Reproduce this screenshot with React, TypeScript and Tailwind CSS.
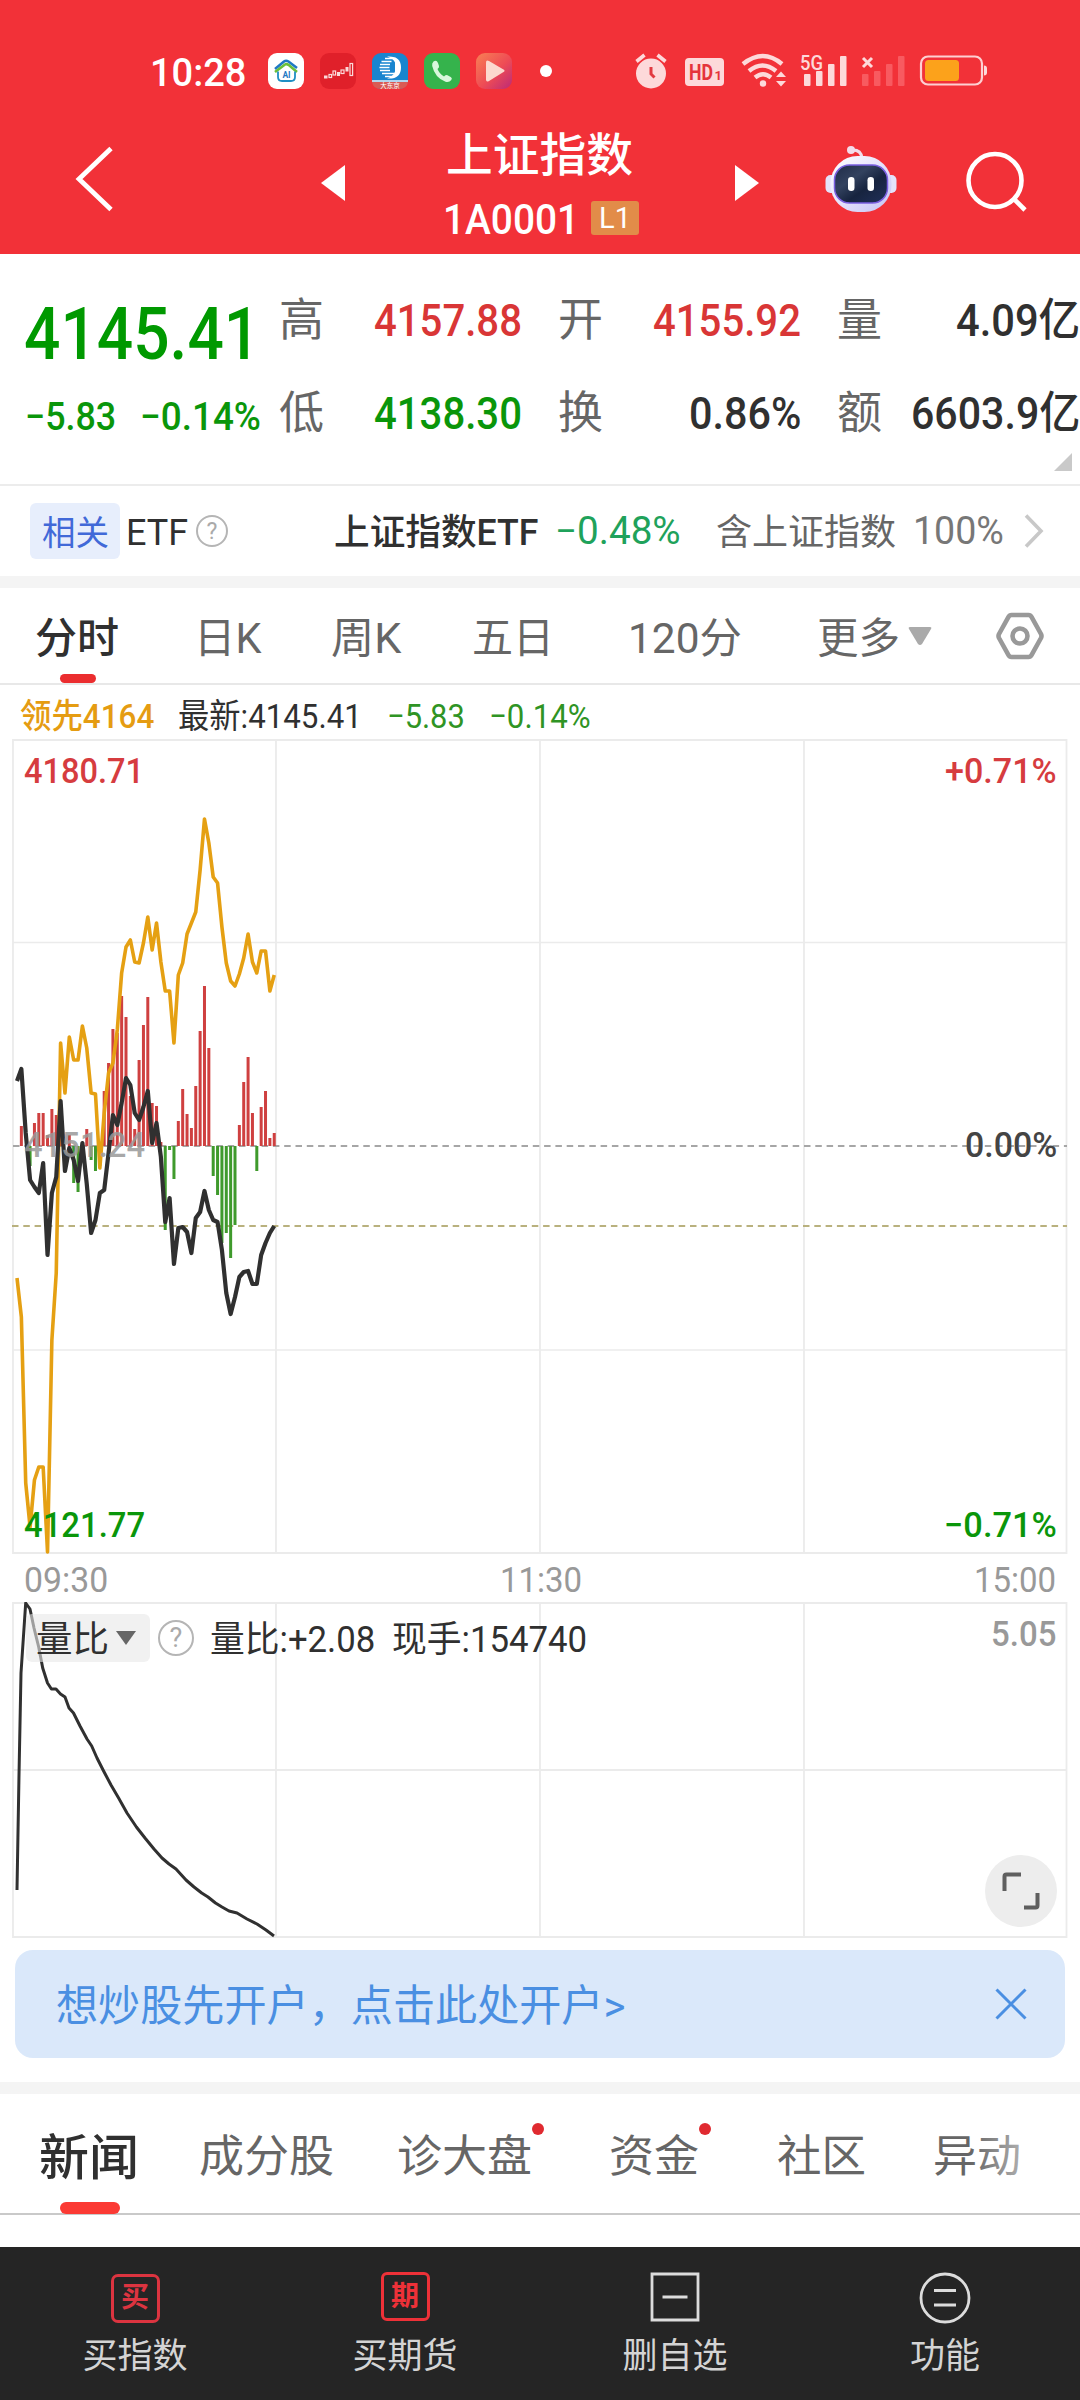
import { useLayoutEffect, useRef } from 'react';
import type { ReactNode } from 'react';

/** One line of text, condensed or widened to fill the width given by its class. */
function Fit({ className = '', children }: { className?: string; children: ReactNode }) {
  const inner = useRef<HTMLSpanElement>(null);
  useLayoutEffect(() => {
    const el = inner.current;
    if (!el || !el.parentElement) return;
    el.style.transform = `translateY(1.5px) scaleX(${el.parentElement.clientWidth / el.offsetWidth})`;
  }, []);
  return (
    <div className={`shrink-0 whitespace-nowrap leading-none ${className}`}>
      <span ref={inner} className="inline-block origin-left">
        {children}
      </span>
    </div>
  );
}

const lead = [
  1278, 1317, 1483, 1527, 1480, 1467, 1467, 1552, 1340, 1273, 1043, 1093, 1037, 1060, 1060, 1026, 1048, 1093, 1094,
  1168, 1113, 1073, 1063, 1030, 973, 947, 940, 962, 963, 943, 917, 950, 923, 962, 991, 991, 1043, 975, 963, 934, 923,
  912, 870, 819, 843, 877, 883, 927, 963, 981, 986, 974, 958, 934, 962, 973, 951, 951, 991, 975,
];
const price = [
  1081, 1069, 1133, 1180, 1187, 1193, 1163, 1255, 1193, 1177, 1101, 1171, 1148, 1160, 1181, 1143, 1184, 1233, 1220,
  1193, 1190, 1153, 1115, 1125, 1103, 1078, 1085, 1113, 1120, 1107, 1091, 1143, 1123, 1157, 1222, 1198, 1264, 1228,
  1227, 1232, 1253, 1218, 1212, 1191, 1210, 1220, 1222, 1250, 1293, 1314, 1297, 1277, 1272, 1271, 1284, 1284, 1255,
  1243, 1233, 1226,
];
const bars = [
  0, 20, 0, -20, 23, 33, 33, 11, 37, 31, 40, 0, 11, -37, -46, -12, 17, -14, -25, -20, 55, 83, 117, 113, 150, 129, 50,
  17, 86, 121, 149, 43, 40, 4, -84, -4, -33, 25, 57, 32, 18, 60, 115, 160, 98, -30, -49, -97, -87, -112, -79, 21, 64,
  89, 33, -25, 39, 55, 8, 13,
];
const ratio =
  '17,1890 19,1775 21,1673 25.7,1603 30,1609 34,1628 38.7,1647 42.7,1668 47.5,1683 51.4,1689 56,1689 60.5,1694 65,1697 69,1708 73.5,1713 80,1726 87,1739 91.7,1746 97,1758 103.6,1771 111,1785 118.6,1798 127,1813 136.4,1827 145,1838 154,1849 162,1858 169,1864 176,1869 186,1880 194,1887 201.7,1893 208,1897 215.5,1903 222,1907 229,1911 237,1913 247,1919 257,1924 266,1930 274,1936';

const px = (i: number) => 17 + i * 4.36;
const toPoints = (ys: number[]) => ys.map((y, i) => `${px(i)},${y}`).join(' ');

function StatusBar() {
  return (
    <div className="flex h-[36px] items-center">
      <Fit className="ml-[150px] w-[96px] text-[38px] font-medium text-white">10:28</Fit>
      <svg className="ml-[22px]" width="244" height="36" viewBox="0 0 244 36">
        <defs>
          <linearGradient id="play" x1="0" y1="0" x2="1" y2="1">
            <stop offset="0" stopColor="#f88054" />
            <stop offset="0.55" stopColor="#ee4b55" />
            <stop offset="1" stopColor="#bb2a78" />
          </linearGradient>
        </defs>
        <rect width="36" height="36" rx="9" fill="#fff" />
        <path d="M7 16 16 8.500q2-1.500 4.500 0L29 15" fill="none" stroke="#1f79c4" strokeWidth="2.600" />
        <path d="M7 19 17 11.500q1.500-1 3.500.3L29 19" fill="none" stroke="#6abf3a" strokeWidth="2.600" />
        <path d="M10 18.500V24q0 4 4 4h9q4 0 4-4v-5.500" fill="none" stroke="#1f8fc4" strokeWidth="1.800" />
        <text x="18.5" y="25" textAnchor="middle" fontSize="8.5" fontWeight="700" fill="#1f79c4">AI</text>

        <rect x="52" width="36" height="36" rx="9" fill="#e0202a" />
        <g fill="none" stroke="#fbd9d9" strokeWidth="1.200">
          <rect x="61" y="21.500" width="2.600" height="3" />
          <rect x="65" y="18" width="2.600" height="4" />
          <rect x="73" y="17" width="3" height="3.500" />
          <rect x="82" y="10.500" width="2.600" height="12" />
        </g>
        <rect x="56" y="22.500" width="3.500" height="3" fill="#fbd9d9" />
        <rect x="69" y="19" width="3" height="4" fill="#fbd9d9" />
        <rect x="77.500" y="14" width="3" height="4.500" fill="#fbd9d9" />

        <rect x="104" width="36" height="36" rx="9" fill="#1985cf" />
        <path d="M104 29h36q-1 7-9 7h-18q-8 0-9-7z" fill="#d95a55" />
        <path d="M104 28h36" stroke="#e4f0fa" strokeWidth="1.400" />
        <path d="M119 3.500q14-1 14 11t-14 11q6-2 8-7V9.500q-1.500-4-8-6z" fill="#fff" />
        <path
          d="M117 5.500h11M113.500 8.500h10M112 11.500h10M111.500 14.500h10M112 17.500h10M114 20.500h12M117 23.500h9"
          stroke="#fff"
          strokeWidth="1.600"
        />
        <text x="122" y="34.500" textAnchor="middle" fontSize="6.500" fill="#fff">大东京</text>

        <rect x="156" width="36" height="36" rx="9" fill="#35b34c" />
        <path
          d="M165.500 8.500q3-2 4.500 1.500l1 3q.5 1.500-1.500 3 2 5 6.500 7.500 2-2 3.500-1.300l3.200 1.700q2 1.200.6 3-2.300 3-5.800 1.800Q167 25 164.200 13q-.5-3 1.300-4.500z"
          fill="#d9f7dc"
        />

        <rect x="208" width="36" height="36" rx="9" fill="url(#play)" />
        <path d="M218 9.500q0-3 3-1.500l14.500 8.500q2 1.200 0 2.600L221 28q-3 1.500-3-1.500z" fill="#fcd9cf" />
      </svg>
      <div className="ml-[28px] size-[12px] rounded-full bg-white" />
      <svg className="ml-[82px] overflow-visible" width="354" height="36" viewBox="0 0 354 36" fill="#fdd9da">
        <circle cx="17" cy="20.500" r="15" />
        <path d="M2.500 8.500 10.500 2M31.500 8.500 23.500 2" stroke="#fdd9da" strokeWidth="3.600" />
        <path d="M17 14v7l3.500 3.500" fill="none" stroke="#e23a41" strokeWidth="3" />
        <rect x="51" y="5" width="39" height="28" rx="4" />
        <text x="55" y="27" fontSize="22" fontWeight="700" fill="#e5343b" textLength="24" lengthAdjust="spacingAndGlyphs">HD</text>
        <text x="80.500" y="27" fontSize="13" fontWeight="700" fill="#e5343b">1</text>
        <g fill="none" stroke="#fdd9da" strokeWidth="4.400">
          <path d="M109 11q20-16 39 0" />
          <path d="M115 18q13.500-11 27 0" />
          <path d="M121 24.500q8-6.500 16 0" />
        </g>
        <circle cx="129" cy="30.500" r="3.200" />
        <path d="m142 24 5-5.500 5 5.500zM142 28l5 5.500 5-5.500z" />
        <text x="166" y="16.500" fontSize="21" fontWeight="500" textLength="23" lengthAdjust="spacingAndGlyphs">5G</text>
        <rect x="170" y="21" width="6.500" height="12" rx="1" />
        <rect x="182" y="18" width="6.500" height="15" rx="1" />
        <rect x="194" y="11" width="6.500" height="22" rx="1" />
        <rect x="206" y="3" width="6.500" height="30" rx="1" />
        <path d="m229 5 9 9m0-9-9 9" stroke="#fdd9da" strokeWidth="3" />
        <g fill="#f85a60">
          <rect x="228" y="21" width="6.500" height="12" rx="1" />
          <rect x="240" y="18" width="6.500" height="15" rx="1" />
          <rect x="252" y="11" width="6.500" height="22" rx="1" />
          <rect x="264" y="3" width="6.500" height="30" rx="1" />
        </g>
        <rect x="287" y="3.500" width="61" height="28" rx="7" fill="none" stroke="#fdd0d2" strokeWidth="2.200" />
        <rect x="291" y="7" width="34" height="21" rx="3.500" fill="#fca21b" />
        <path d="M350 12.500q3 0 3 3v4q0 3-3 3z" />
      </svg>
    </div>
  );
}

function Header() {
  return (
    <div className="h-[254px] bg-[#f23138] pt-[53px]">
      <StatusBar />
      <div className="mt-[31px] flex h-[134px] items-start">
        <svg className="ml-[74px] mt-[26px]" width="40" height="66" fill="none" stroke="#fff" strokeWidth="4.800">
          <path d="M37 2.500 5 33l32 30.500" />
        </svg>
        <svg className="ml-[207px] mt-[45px]" width="24" height="36" fill="#fff">
          <path d="M24 0v36L0 18z" />
        </svg>
        <div className="ml-[99px] w-[198px]">
          <Fit className="ml-[2px] mt-[10px] h-[48px] w-[187px] text-[46px] font-medium text-white">上证指数</Fit>
          <div className="mt-[18px] flex h-[44px] items-center">
            <Fit className="ml-[-1px] w-[136px] text-[42px] font-medium text-white">1A0001</Fit>
            <div className="ml-[12px] flex h-[34px] w-[48px] items-center justify-center rounded-[3px] bg-[#e28c49] text-[29px] leading-none text-white">
              L1
            </div>
          </div>
        </div>
        <svg className="ml-[93px] mt-[45px]" width="24" height="36" fill="#fff">
          <path d="M0 0v36l24-18z" />
        </svg>
        <svg className="ml-[65px] mt-[25px]" width="74" height="70" viewBox="0 0 74 70">
          <defs>
            <linearGradient id="shell" x1="0" y1="0" x2="1" y2="1">
              <stop offset="0" stopColor="#fff" />
              <stop offset="0.5" stopColor="#e6e2fb" />
              <stop offset="1" stopColor="#c3c2f5" />
            </linearGradient>
            <linearGradient id="visor" x1="0" y1="0" x2="1" y2="1">
              <stop offset="0" stopColor="#202c48" />
              <stop offset="0.35" stopColor="#33425f" />
              <stop offset="0.6" stopColor="#17243f" />
              <stop offset="1" stopColor="#20305a" />
            </linearGradient>
          </defs>
          <path d="M27 5q10-1 11 8" fill="none" stroke="#f3dcea" strokeWidth="3" />
          <circle cx="27" cy="5" r="4" fill="#f3dcea" />
          <rect x="1.500" y="30" width="71" height="18" rx="5" fill="#e4e2fa" />
          <rect x="6.500" y="11" width="61" height="56" rx="27" fill="url(#shell)" />
          <rect x="10.500" y="20" width="53" height="38" rx="15" fill="url(#visor)" stroke="#7a5fe0" strokeWidth="1.500" />
          <rect x="24" y="32" width="6.500" height="14" rx="3.200" fill="#fff" />
          <rect x="43.500" y="32" width="6.500" height="14" rx="3.200" fill="#fff" />
        </svg>
        <svg className="ml-[68px] mt-[30px]" width="64" height="64" fill="none" stroke="#fff" strokeWidth="4.600">
          <circle cx="29" cy="30.500" r="26.500" />
          <path d="m48 49 11 11" />
        </svg>
      </div>
    </div>
  );
}

function Stat({ label, children }: { label: string; children: ReactNode }) {
  return (
    <div className="flex h-[93px] items-center justify-between">
      <Fit className="w-[45px] text-[45px] text-[#666]">{label}</Fit>
      {children}
    </div>
  );
}

function Quote() {
  return (
    <div className="flex h-[232px] border-b-2 border-[#ececec] pt-[18px]">
      <div className="w-[279px] shrink-0">
        <Fit className="ml-[24px] mt-[24px] w-[236px] text-[73px] font-medium text-[#090]">4145.41</Fit>
        <div className="mt-[27px] flex">
          <Fit className="ml-[25px] w-[91px] text-[39px] font-medium text-[#0a960a]">−5.83</Fit>
          <Fit className="ml-[24px] w-[121px] text-[39px] font-medium text-[#0a960a]">−0.14%</Fit>
        </div>
      </div>
      <div className="relative grid w-[801px] grid-cols-[243px_243px_243px] content-start gap-x-[36px]">
        <Stat label="高"><Fit className="w-[148px] text-[45px] font-medium text-[#d93636]">4157.88</Fit></Stat>
        <Stat label="开"><Fit className="w-[148px] text-[45px] font-medium text-[#d93636]">4155.92</Fit></Stat>
        <Stat label="量"><Fit className="w-[124px] text-[45px] font-medium text-[#303030]">4.09亿</Fit></Stat>
        <Stat label="低"><Fit className="w-[148px] text-[45px] font-medium text-[#0a960a]">4138.30</Fit></Stat>
        <Stat label="换"><Fit className="w-[112px] text-[45px] font-medium text-[#303030]">0.86%</Fit></Stat>
        <Stat label="额"><Fit className="w-[169px] text-[45px] font-medium text-[#303030]">6603.9亿</Fit></Stat>
        <svg className="absolute right-[8px] top-[181px]" width="18" height="18" fill="#c9c9c9">
          <path d="M18 0v18H0z" />
        </svg>
      </div>
    </div>
  );
}

function Question({ className }: { className: string }) {
  return (
    <div className={`flex shrink-0 items-center justify-center rounded-full border-2 border-[#b5b5b5] leading-none text-[#aaa] ${className}`}>
      ?
    </div>
  );
}

function Related() {
  return (
    <div className="flex h-[90px] items-center text-[36px] text-[#303030]">
      <div className="ml-[30px] flex h-[56px] w-[90px] items-center justify-center rounded-[6px] bg-[#e7eefc]">
        <Fit className="w-[67px] text-[34px] text-[#4169d8]">相关</Fit>
      </div>
      <Fit className="ml-[6px] w-[62px]">ETF</Fit>
      <Question className="ml-[8px] size-[32px] text-[23px]" />
      <Fit className="ml-[106px] w-[204px] font-medium">上证指数ETF</Fit>
      <Fit className="ml-[17px] mt-[-4px] w-[126px] text-[38px] text-[#1fa25b]">−0.48%</Fit>
      <Fit className="ml-[35px] w-[180px] text-[#666]">含上证指数</Fit>
      <Fit className="ml-[17px] mt-[-4px] w-[91px] text-[38px] text-[#777]">100%</Fit>
      <svg className="ml-[20px]" width="20" height="34" fill="none" stroke="#c8c8c8" strokeWidth="3.600">
        <path d="m2 1.500 15 15.500L2 32.500" />
      </svg>
    </div>
  );
}

function PeriodTabs() {
  return (
    <div className="relative flex h-[97px] items-center border-b-2 border-[#e8e8e8] text-[42px] text-[#666]">
      <Fit className="ml-[35px] mt-[2px] w-[84px] font-medium text-[#303030]">分时</Fit>
      <Fit className="ml-[75px] mt-[2px] w-[67px]">日K</Fit>
      <Fit className="ml-[70px] mt-[2px] w-[70px]">周K</Fit>
      <Fit className="ml-[71px] mt-[2px] w-[82px]">五日</Fit>
      <Fit className="ml-[74px] mt-[2px] w-[114px]">120分</Fit>
      <Fit className="ml-[75px] mt-[2px] w-[83px]">更多</Fit>
      <svg className="ml-[8px]" width="24" height="20" fill="#aaa">
        <path d="M2 1h20q2 0 1 2L14 18q-2 2-4 0L1 3Q0 1 2 1z" />
      </svg>
      <svg className="ml-[62px]" width="52" height="48" fill="none" stroke="#999" strokeWidth="4.600" strokeLinejoin="round">
        <path d="M17.500 3h17q2 0 3 1.800L47 22q1 2 0 4l-9.500 17.200q-1 1.800-3 1.800h-17q-2 0-3-1.800L5 26q-1-2 0-4L14.500 4.800q1-1.800 3-1.800z" />
        <circle cx="26" cy="24" r="7.500" />
      </svg>
      <div className="absolute bottom-0 left-[60px] h-[9px] w-[36px] rounded-[5px] bg-[#eb2d2f]" />
    </div>
  );
}

function MainChart() {
  return (
    <div className="relative h-[815px]">
      <svg width="1080" height="815" viewBox="0 739 1080 815" fill="none">
        <g stroke="#ebebeb" strokeWidth="1.800">
          <path d="M13 740H1066.500V1553H13zM276 740V1553M540 740V1553M804 740V1553" />
          <path d="M13 942.500H1067M13 1350H1067" strokeWidth="1.500" />
        </g>
        <path d="M13 1146H1067" stroke="#a6a6a6" strokeWidth="1.800" strokeDasharray="6.500 4.800" />
        <path d="M12 1226H1067" stroke="#b9b17e" strokeWidth="1.800" strokeDasharray="6.500 4.800" />
        {bars.map((h, i) => (
          <rect
            key={i}
            x={px(i) - 1.5}
            y={h > 0 ? 1146 - h : 1146}
            width="3"
            height={Math.abs(h)}
            fill={h > 0 ? '#cf4040' : '#3f9a2c'}
          />
        ))}
        <polyline points={toPoints(lead)} stroke="#e5a013" strokeWidth="3.600" strokeLinejoin="round" />
        <polyline points={toPoints(price)} stroke="#303030" strokeWidth="4.200" strokeLinejoin="round" />
      </svg>
      <div className="absolute inset-0 text-[35px] font-medium">
        <Fit className="absolute left-[24px] top-[13px] w-[120px] text-[#d63c3f]">4180.71</Fit>
        <Fit className="absolute left-[24px] top-[387px] w-[121px] text-[#999]/85">4151.24</Fit>
        <Fit className="absolute left-[24px] top-[767px] w-[121px] text-[#0a960a]">4121.77</Fit>
        <Fit className="absolute left-[945px] top-[13px] w-[112px] text-[#d63c3f]">+0.71%</Fit>
        <Fit className="absolute left-[965px] top-[387px] w-[92px] text-[#444]">0.00%</Fit>
        <Fit className="absolute left-[944px] top-[767px] w-[113px] text-[#0a960a]">−0.71%</Fit>
      </div>
    </div>
  );
}

function RatioChart() {
  return (
    <div className="relative h-[337px] text-[36px] text-[#303030]">
      <svg width="1080" height="337" viewBox="0 1602 1080 337" fill="none">
        <path
          d="M13 1603H1066.500V1937H13zM276 1603V1937M540 1603V1937M804 1603V1937M13 1770H1067"
          stroke="#ebebeb"
          strokeWidth="1.800"
        />
        <polyline points={ratio} stroke="#303030" strokeWidth="3" strokeLinejoin="round" />
      </svg>
      <div className="absolute left-[26px] top-[12px] flex h-[48px] items-center">
        <div className="flex h-[48px] w-[124px] items-center rounded-[6px] bg-[#e8e8e8]/60">
          <Fit className="ml-[10px] w-[73px]">量比</Fit>
          <svg className="ml-[7px]" width="20" height="14" fill="#666">
            <path d="M0 0h20L10 14z" />
          </svg>
        </div>
        <Question className="ml-[8px] size-[36px] text-[27px]" />
        <Fit className="ml-[16px] w-[165px]">量比:+2.08</Fit>
        <Fit className="ml-[17px] w-[195px]">现手:154740</Fit>
      </div>
      <Fit className="absolute right-[24px] top-[13px] w-[65px] text-[35px] font-medium text-[#999]">5.05</Fit>
      <div className="absolute left-[985px] top-[253px] flex size-[72px] items-center justify-center rounded-full bg-[#ededed]">
        <svg width="38" height="38" fill="none" stroke="#5f5f5f" strokeWidth="4">
          <path d="M2.500 19V4.500q0-2 2-2H19M35.500 21v12.500q0 2-2 2H22" />
        </svg>
      </div>
    </div>
  );
}

function NewsTabs() {
  return (
    <div className="relative flex h-[121px] items-center border-b-2 border-[#c9c9c9] pt-[3px] text-[44px] text-[#666]">
      <Fit className="ml-[39px] mt-[2px] w-[100px] text-[49px] font-medium text-[#303030]">新闻</Fit>
      <Fit className="ml-[60px] w-[135px]">成分股</Fit>
      <Fit className="ml-[63px] w-[135px]">诊大盘</Fit>
      <Fit className="ml-[77px] w-[90px]">资金</Fit>
      <Fit className="ml-[78px] w-[89px]">社区</Fit>
      <Fit className="ml-[67px] w-[88px]">异动</Fit>
      <div className="absolute left-[532px] top-[29px] size-[12px] rounded-full bg-[#e02a30]" />
      <div className="absolute left-[699px] top-[29px] size-[12px] rounded-full bg-[#e02a30]" />
      <div className="absolute left-[970px] top-[20px] h-[80px] w-[60px] bg-gradient-to-r from-white/0 to-white/55" />
      <div className="absolute bottom-[-1px] left-[60px] h-[12px] w-[60px] rounded-[6px] bg-[#fb3a34]" />
    </div>
  );
}

function BottomItem({ icon, label }: { icon: ReactNode; label: string }) {
  return (
    <div className="flex flex-col items-center pt-[25px]">
      <div className="flex h-[52px] items-center justify-center">{icon}</div>
      <div className="mt-[14px] text-[35px] leading-[38px] text-[#d4d4d4]">{label}</div>
    </div>
  );
}

function BottomBar() {
  return (
    <div className="grid h-[153px] grid-cols-4 bg-[#252525]">
      <BottomItem
        label="买指数"
        icon={
          <div className="flex size-[49px] items-center justify-center rounded-[7px] border-[3px] border-[#dc3440] text-[28px] font-bold leading-none text-[#dc3440]">
            买
          </div>
        }
      />
      <BottomItem
        label="买期货"
        icon={
          <div className="mb-[3px] flex size-[49px] items-center justify-center rounded-[6px] border-[3px] border-[#ee3138] text-[28px] font-bold leading-none text-[#ee3138]">
            期
          </div>
        }
      />
      <BottomItem
        label="删自选"
        icon={
          <svg className="mb-[2px]" width="50" height="50" fill="none" stroke="#dcdcdc" strokeWidth="2.800">
            <path d="M2 2h46v46H2zM12.500 25h25" />
          </svg>
        }
      />
      <BottomItem
        label="功能"
        icon={
          <svg width="52" height="52" fill="none" stroke="#dcdcdc" strokeWidth="2.800">
            <circle cx="26" cy="26" r="24" />
            <path d="M15 18.500h22M15 33h22" />
          </svg>
        }
      />
    </div>
  );
}

export default function App() {
  return (
    <div className="flex h-[2400px] w-[1080px] flex-col overflow-hidden bg-white font-[Roboto,'Noto_Sans_CJK_SC',sans-serif]">
      <Header />
      <Quote />
      <Related />
      <div className="h-[12px] bg-[#f4f4f4]" />
      <PeriodTabs />
      <div className="flex h-[54px] items-center pt-[3px] text-[34px]">
        <Fit className="ml-[20px] w-[134px] font-medium text-[#e59c12]">领先4164</Fit>
        <Fit className="ml-[24px] w-[184px] text-[#303030]">最新:4145.41</Fit>
        <Fit className="ml-[25px] w-[78px] text-[#2f9424]">−5.83</Fit>
        <Fit className="ml-[24px] w-[102px] text-[#2f9424]">−0.14%</Fit>
      </div>
      <MainChart />
      <div className="flex h-[48px] items-center text-[35px] text-[#999]">
        <Fit className="ml-[24px] w-[84px]">09:30</Fit>
        <Fit className="ml-[392px] w-[82px]">11:30</Fit>
        <Fit className="ml-[392px] w-[82px]">15:00</Fit>
      </div>
      <RatioChart />
      <div className="mx-[15px] mt-[11px] flex h-[108px] shrink-0 items-center justify-between rounded-[18px] bg-[#dae8fa] pl-[41px] pr-[38px]">
        <Fit className="w-[570px] text-[43px] text-[#4a8fe2]">想炒股先开户，点击此处开户&gt;</Fit>
        <svg width="32" height="32" fill="none" stroke="#4a8fe2" strokeWidth="3">
          <path d="m1.500 1.500 29 29m0-29-29 29" />
        </svg>
      </div>
      <div className="mt-[24px] h-[12px] shrink-0 bg-[#f4f4f4]" />
      <NewsTabs />
      <div className="mt-auto">
        <BottomBar />
      </div>
    </div>
  );
}
